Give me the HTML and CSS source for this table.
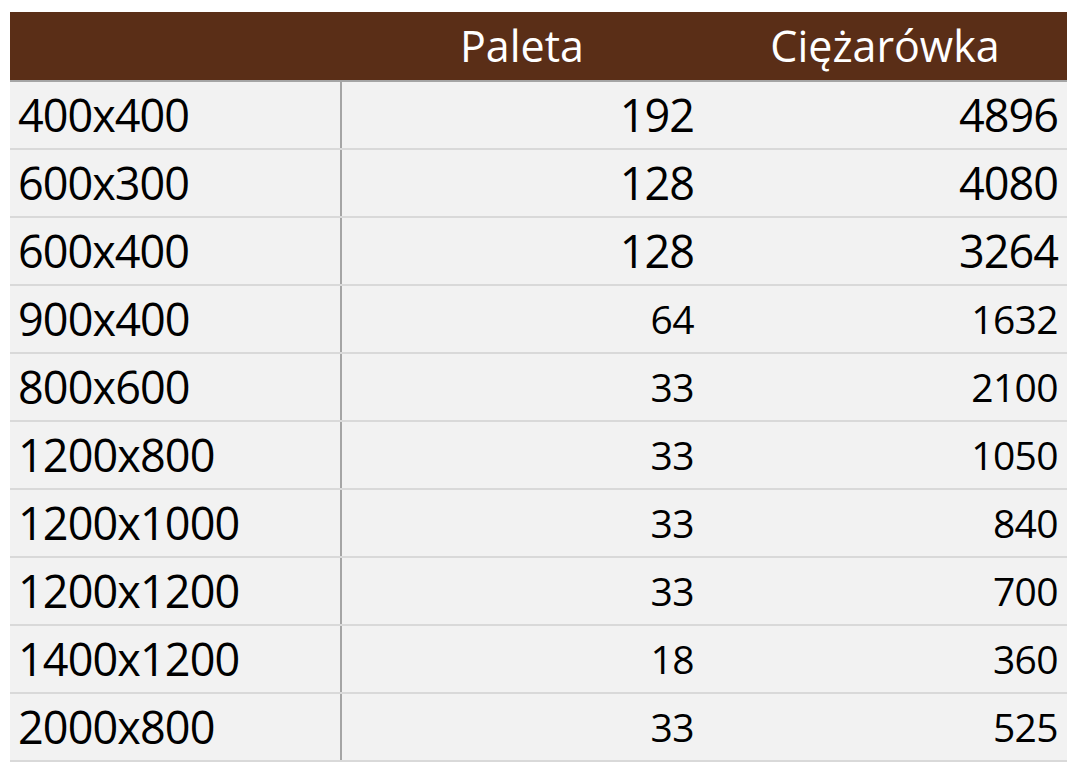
FILE: index.html
```html
<!DOCTYPE html>
<html lang="pl">
<head>
<meta charset="utf-8">
<title>Paleta / Ciężarówka</title>
<link rel="stylesheet" href="styles.css">
</head>
<body>
<table class="grid">
  <thead>
    <tr><th class="c1"></th><th class="c2">Paleta</th><th class="c3">Ciężarówka</th></tr>
  </thead>
  <tbody>
    <tr class="big"><td class="c1">400x400</td><td class="c2">192</td><td class="c3">4896</td></tr>
    <tr class="big"><td class="c1">600x300</td><td class="c2">128</td><td class="c3">4080</td></tr>
    <tr class="big"><td class="c1">600x400</td><td class="c2">128</td><td class="c3">3264</td></tr>
    <tr><td class="c1">900x400</td><td class="c2">64</td><td class="c3">1632</td></tr>
    <tr><td class="c1">800x600</td><td class="c2">33</td><td class="c3">2100</td></tr>
    <tr><td class="c1">1200x800</td><td class="c2">33</td><td class="c3">1050</td></tr>
    <tr><td class="c1">1200x1000</td><td class="c2">33</td><td class="c3">840</td></tr>
    <tr><td class="c1">1200x1200</td><td class="c2">33</td><td class="c3">700</td></tr>
    <tr><td class="c1">1400x1200</td><td class="c2">18</td><td class="c3">360</td></tr>
    <tr><td class="c1">2000x800</td><td class="c2">33</td><td class="c3">525</td></tr>
  </tbody>
</table>
</body>
</html>
```

FILE: styles.css
```css
html, body {
  margin: 0;
  padding: 0;
  background: #ffffff;
}
body {
  padding: 12px 0 0 10px;
  font-family: "Open Sans", "Noto Sans", sans-serif;
}
.grid {
  border-collapse: collapse;
  table-layout: fixed;
  width: 1057px;
}
.grid th, .grid td {
  padding: 0;
  white-space: nowrap;
}
.grid .c1 { width: 331px; }
.grid .c2 { width: 362px; }
.grid .c3 { width: 364px; }

.grid thead th {
  background: #5a2e17;
  color: #ffffff;
  font-weight: 400;
  font-size: 43px;
  height: 68px;
  line-height: 68px;
  text-align: center;
  border-bottom: 2px solid #a5a5a5;
}
.grid tbody td {
  background: #f2f2f2;
  color: #000000;
  font-weight: 400;
  height: 66px;
  line-height: 66px;
  border-bottom: 2px solid #d9d9d9;
  font-size: 39px;
  letter-spacing: -0.6px;
  text-align: right;
}
.grid tbody td.c1 {
  font-size: 45px;
  letter-spacing: -0.9px;
  text-align: left;
  padding-left: 8px;
  border-right: 2px solid #a5a5a5;
}
.grid tbody td.c2 {
  padding-right: 9px;
}
.grid tbody td.c3 {
  padding-right: 9px;
}
.grid tbody tr.big td {
  font-size: 45px;
  letter-spacing: -1px;
}
```
